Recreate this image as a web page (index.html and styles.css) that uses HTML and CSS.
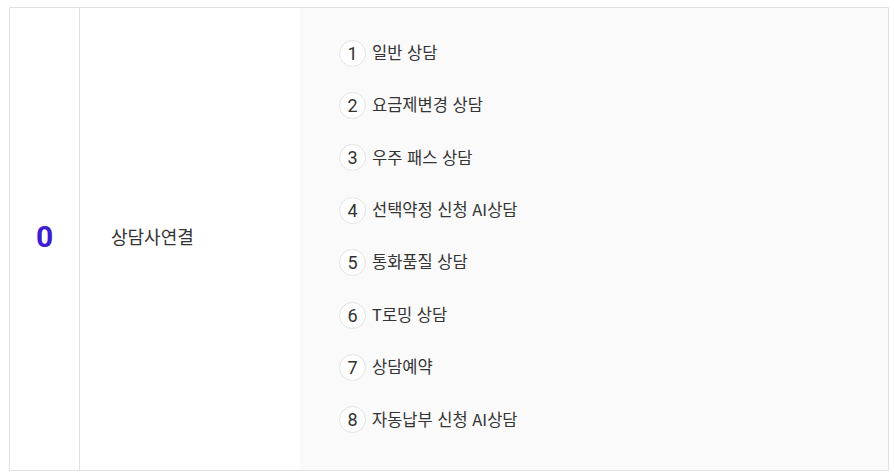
FILE: index.html
```html
<!DOCTYPE html>
<html lang="ko">
<head>
<meta charset="utf-8">
<link rel="stylesheet" href="styles.css">
</head>
<body>
<div class="wrap">
  <div class="table">
    <div class="cell num">0</div>
    <div class="cell name">상담사연결</div>
    <div class="cell menu">
      <ol class="list">
        <li class="item"><span class="badge">1</span><span class="label">일반 상담</span></li>
        <li class="item"><span class="badge">2</span><span class="label">요금제변경 상담</span></li>
        <li class="item"><span class="badge">3</span><span class="label">우주 패스 상담</span></li>
        <li class="item"><span class="badge">4</span><span class="label">선택약정 신청 AI상담</span></li>
        <li class="item"><span class="badge">5</span><span class="label">통화품질 상담</span></li>
        <li class="item"><span class="badge">6</span><span class="label">T로밍 상담</span></li>
        <li class="item"><span class="badge">7</span><span class="label">상담예약</span></li>
        <li class="item"><span class="badge">8</span><span class="label">자동납부 신청 AI상담</span></li>
      </ol>
    </div>
  </div>
</div>
</body>
</html>
```
FILE: styles.css
```css
html, body {
  margin: 0;
  padding: 0;
  background: #fff;
}
body {
  font-family: "Noto Sans CJK KR", "Noto Sans", Roboto, sans-serif;
  color: #333;
}
.wrap {
  padding: 7px 5px 0 9px;
}
.table {
  display: grid;
  grid-template-columns: 70px 220px 1fr;
  width: 880px;
  height: 464px;
  box-sizing: border-box;
  border: 1px solid #e2e2e2;
}
.cell {
  display: flex;
  align-items: center;
}
.num {
  justify-content: center;
  border-right: 1px solid #e2e2e2;
  font-family: Roboto, "Noto Sans", sans-serif;
  font-weight: 700;
  font-size: 30px;
  color: #3d1dd2;
  padding-bottom: 6px;
}
.name {
  padding-left: 31px;
  font-size: 18px;
  color: #333;
  padding-bottom: 6px;
}
.menu {
  background: #fafafa;
  align-items: flex-start;
  padding: 32px 0 0 39px;
}
.list {
  list-style: none;
  margin: 0;
  padding: 0;
  display: flex;
  flex-direction: column;
  gap: 26.43px;
}
.item {
  display: flex;
  align-items: center;
  height: 26px;
}
.badge {
  box-sizing: border-box;
  width: 27px;
  height: 27px;
  border: 1px solid #e3e3e3;
  border-radius: 50%;
  background: #fff;
  display: flex;
  align-items: center;
  justify-content: center;
  font-family: Roboto, "Noto Sans", sans-serif;
  font-size: 18px;
  color: #333;
  margin-right: 6px;
}
.label {
  font-size: 16.5px;
  color: #333;
  line-height: 1;
  padding-bottom: 2px;
}
```
